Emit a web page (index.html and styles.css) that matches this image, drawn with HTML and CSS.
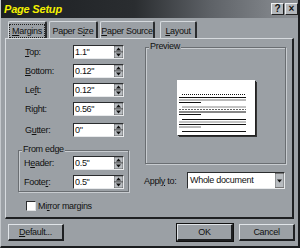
FILE: index.html
```
<!DOCTYPE html>
<html lang="en">
<head>
  <meta charset="UTF-8" />
  <title>Page Setup</title>
  <link rel="stylesheet" href="styles.css">
</head>
<body>
  <div class="dialog">
    <div class="titlebar">
      <span class="title">Page Setup</span>
      <div class="title-btns">
        <span class="tbtn">?</span>
        <span class="tbtn">&#215;</span>
      </div>
    </div>

    <div class="tabs">
      <div class="tab active margins-tab"><span class="focus"><u>M</u>argins</span></div>
      <div class="tab size-tab">Paper S<u>i</u>ze</div>
      <div class="tab source-tab"><u>P</u>aper Source</div>
      <div class="tab layout-tab"><u>L</u>ayout</div>
    </div>

    <div class="panel">
      <div class="margins">
        <div class="field"><label><u>T</u>op:</label><div class="spin"><span class="val">1.1"</span><svg class="arrows" viewBox="0 0 9 12"><rect x="0" y="0" width="9" height="6" class="sb"/><rect x="0" y="6" width="9" height="6" class="sb"/><path d="M2 4.5h5L4.5 1.5z M2 7.5h5L4.5 10.5z"/></svg></div></div>
        <div class="field"><label><u>B</u>ottom:</label><div class="spin"><span class="val">0.12"</span><svg class="arrows" viewBox="0 0 9 12"><rect x="0" y="0" width="9" height="6" class="sb"/><rect x="0" y="6" width="9" height="6" class="sb"/><path d="M2 4.5h5L4.5 1.5z M2 7.5h5L4.5 10.5z"/></svg></div></div>
        <div class="field"><label>Le<u>f</u>t:</label><div class="spin"><span class="val">0.12"</span><svg class="arrows" viewBox="0 0 9 12"><rect x="0" y="0" width="9" height="6" class="sb"/><rect x="0" y="6" width="9" height="6" class="sb"/><path d="M2 4.5h5L4.5 1.5z M2 7.5h5L4.5 10.5z"/></svg></div></div>
        <div class="field"><label>Ri<u>g</u>ht:</label><div class="spin"><span class="val">0.56"</span><svg class="arrows" viewBox="0 0 9 12"><rect x="0" y="0" width="9" height="6" class="sb"/><rect x="0" y="6" width="9" height="6" class="sb"/><path d="M2 4.5h5L4.5 1.5z M2 7.5h5L4.5 10.5z"/></svg></div></div>
        <div class="field gutter"><label>G<u>u</u>tter:</label><div class="spin"><span class="val">0"</span><svg class="arrows" viewBox="0 0 9 12"><rect x="0" y="0" width="9" height="6" class="sb"/><rect x="0" y="6" width="9" height="6" class="sb"/><path d="M2 4.5h5L4.5 1.5z M2 7.5h5L4.5 10.5z"/></svg></div></div>

        <div class="group edge">
          <span class="legend">From edge</span>
          <div class="field"><label>H<u>e</u>ader:</label><div class="spin"><span class="val">0.5"</span><svg class="arrows" viewBox="0 0 9 12"><rect x="0" y="0" width="9" height="6" class="sb"/><rect x="0" y="6" width="9" height="6" class="sb"/><path d="M2 4.5h5L4.5 1.5z M2 7.5h5L4.5 10.5z"/></svg></div></div>
          <div class="field"><label>Foote<u>r</u>:</label><div class="spin"><span class="val">0.5"</span><svg class="arrows" viewBox="0 0 9 12"><rect x="0" y="0" width="9" height="6" class="sb"/><rect x="0" y="6" width="9" height="6" class="sb"/><path d="M2 4.5h5L4.5 1.5z M2 7.5h5L4.5 10.5z"/></svg></div></div>
        </div>

        <div class="check"><span class="box"></span>Mi<u>r</u>ror margins</div>
      </div>

      <div class="side">
        <div class="group preview">
          <span class="legend">Preview</span>
          <div class="page">
            <svg viewBox="0 0 78 55" width="78" height="55">
              <g stroke="#111" stroke-width="1">
                <line x1="5" y1="14.5" x2="69" y2="14.5" stroke-dasharray="1 1"/>
                <line x1="2" y1="17.5" x2="69" y2="17.5"/>
                <line x1="2" y1="20" x2="69" y2="20" stroke="#777"/>
                <line x1="2" y1="22.5" x2="24" y2="22.5"/>
                <line x1="5" y1="27" x2="69" y2="27" stroke="#888"/>
                <line x1="2" y1="29.5" x2="69" y2="29.5" stroke="#666" stroke-dasharray="2 1"/>
                <line x1="2" y1="32" x2="69" y2="32"/>
                <line x1="2" y1="34.5" x2="24" y2="34.5"/>
                <line x1="5" y1="39.5" x2="69" y2="39.5"/>
                <line x1="2" y1="42" x2="69" y2="42" stroke="#888"/>
                <line x1="2" y1="44.5" x2="69" y2="44.5"/>
                <line x1="2" y1="47" x2="24" y2="47" stroke="#777"/>
                <line x1="5" y1="51.5" x2="69" y2="51.5"/>
              </g>
            </svg>
          </div>
        </div>
        <div class="apply">
          <label>Appl<u>y</u> to:</label>
          <div class="select"><span class="val">Whole document</span><svg class="drop" viewBox="0 0 9 14"><rect x="0" y="0" width="9" height="14" class="sb"/><path d="M2 6h5L4.5 9z"/></svg></div>
        </div>
      </div>
    </div>

    <div class="buttons">
      <div class="btn"><u>D</u>efault...</div>
      <div class="spacer"></div>
      <div class="btn default">OK</div>
      <div class="btn">Cancel</div>
    </div>
  </div>
</body>
</html>
```

FILE: styles.css
```
body {
  margin: 0;
  background-color: #9ba0a5;
  font-family: 'Liberation Sans', Arial, sans-serif;
  font-size: 9px;
  letter-spacing: -0.3px;
  color: #111;
}

u {
  text-decoration: underline;
  text-underline-offset: 1px;
}

.dialog {
  width: 300px;
  height: 248px;
  box-sizing: border-box;
  background: #9ba0a5;
  border-left: 1px solid #c4c8cc;
  border-right: 2px solid #1a1c1e;
  border-bottom: 2px solid #1a1c1e;
  display: flex;
  flex-direction: column;
}

.titlebar {
  height: 18px;
  display: flex;
  align-items: center;
  justify-content: space-between;
  background: linear-gradient(90deg, #1c1f22 0%, #2a2d30 45%, #5d6166 70%, #8d9196 100%);
}

.title {
  color: #f4f000;
  font-weight: bold;
  font-style: italic;
  font-size: 11px;
  letter-spacing: -0.2px;
  padding-left: 3px;
}

.title-btns {
  display: flex;
  gap: 1px;
}

.tbtn {
  width: 13px;
  height: 12px;
  box-sizing: border-box;
  background: #b4b8bc;
  border-top: 1px solid #eef0f2;
  border-left: 1px solid #eef0f2;
  border-right: 1px solid #222;
  border-bottom: 1px solid #222;
  font-size: 10px;
  font-weight: bold;
  line-height: 10px;
  letter-spacing: 0;
  text-align: center;
  color: #111;
}

.tabs {
  display: flex;
  margin-top: 3px;
  padding-left: 7px;
  height: 17px;
}

.tab {
  box-sizing: border-box;
  height: 17px;
  padding-top: 4px;
  margin-right: 2px;
  text-align: center;
  white-space: nowrap;
  border-top: 1px solid #d6dade;
  border-left: 1px solid #d6dade;
  border-right: 2px solid #2a2c2e;
  border-radius: 2px 2px 0 0;
}

.margins-tab { width: 39px; padding-top: 2px; }
.size-tab { width: 49px; }
.source-tab { width: 55px; }
.layout-tab { width: 37px; margin-left: 3px; }

.tab.active .focus {
  display: inline-block;
  padding: 1px 2px;
  border: 1px dotted #222;
}

.panel {
  height: 181px;
  box-sizing: border-box;
  margin: 0 4px 0 4px;
  border-top: 1px solid #d6dade;
  border-left: 1px solid #d6dade;
  border-right: 2px solid #1e2022;
  border-bottom: 2px solid #1e2022;
  display: flex;
}

.margins {
  width: 133px;
  padding: 6px 0 0 19px;
  box-sizing: border-box;
}

.field {
  display: flex;
  align-items: center;
  height: 14px;
  margin-bottom: 5px;
}

.field label {
  width: 48px;
}

.field.gutter {
  margin-top: 7px;
}

.spin {
  width: 51px;
  height: 14px;
  box-sizing: border-box;
  display: flex;
  background: #fff;
  border-top: 1px solid #2a2c2e;
  border-left: 1px solid #2a2c2e;
  border-right: 1px solid #e8eaec;
  border-bottom: 1px solid #e8eaec;
}

.spin .val {
  flex: 1;
  padding-left: 1px;
  line-height: 12px;
}

.arrows {
  width: 9px;
  height: 12px;
}

.sb {
  fill: #b8bcc0;
  stroke: #333;
  stroke-width: 0.6;
}

.arrows path, .drop path {
  fill: #111;
}

.group {
  position: relative;
  border: 1px solid #6a6e72;
  box-shadow: 1px 1px 0 #c8ccd0 inset, 1px 1px 0 #c8ccd0;
}

.legend {
  position: absolute;
  top: -7px;
  left: 3px;
  padding: 0 1px;
  background: #9ba0a5;
}

.edge {
  margin: 13px 0 0 -7px;
  width: 111px;
  height: 42px;
  box-sizing: border-box;
  padding: 5px 0 0 5px;
}

.edge .field label {
  width: 49px;
}

.check {
  display: flex;
  align-items: center;
  margin: 9px 0 0 1px;
}

.box {
  width: 8px;
  height: 8px;
  background: #fff;
  border-top: 1px solid #2a2c2e;
  border-left: 1px solid #2a2c2e;
  border-right: 1px solid #e0e2e4;
  border-bottom: 1px solid #e0e2e4;
  margin-right: 2px;
}

.side {
  padding: 8px 0 0 6px;
}

.preview {
  width: 141px;
  height: 117px;
  box-sizing: border-box;
  display: flex;
  align-items: center;
  justify-content: center;
}

.page {
  width: 78px;
  height: 55px;
  background: #fff;
  box-shadow: 1px 1px 0 #222, 2px 2px 0 #333;
  margin: 3px 0 0 1px;
}

.page svg {
  display: block;
}

.apply {
  display: flex;
  align-items: center;
  margin-top: 8px;
  margin-left: -1px;
}

.apply label {
  width: 43px;
}

.select {
  width: 98px;
  height: 17px;
  box-sizing: border-box;
  display: flex;
  background: #fff;
  border-top: 1px solid #2a2c2e;
  border-left: 1px solid #2a2c2e;
  border-right: 1px solid #e8eaec;
  border-bottom: 1px solid #e8eaec;
}

.select .val {
  flex: 1;
  padding-left: 2px;
  line-height: 15px;
}

.drop {
  width: 9px;
  height: 15px;
}

.buttons {
  display: flex;
  margin-top: 5px;
  padding: 0 3px 0 7px;
  gap: 6px;
}

.spacer {
  flex: 1;
}

.btn {
  width: 56px;
  height: 17px;
  box-sizing: border-box;
  border-top: 1px solid #e0e4e8;
  border-left: 1px solid #e0e4e8;
  border-right: 2px solid #1e2022;
  border-bottom: 2px solid #1e2022;
  text-align: center;
  line-height: 14px;
}

.btn.default {
  outline: 1px solid #111;
  outline-offset: 0;
}
```
